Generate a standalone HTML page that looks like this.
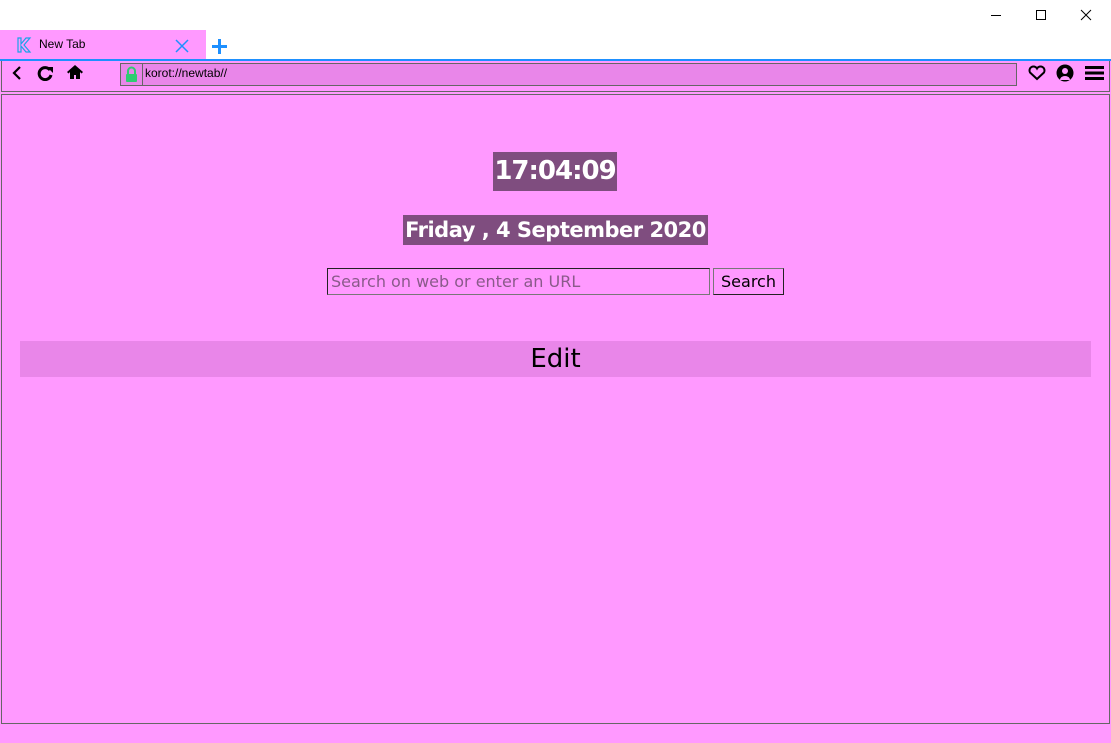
<!DOCTYPE html>
<html><head><meta charset="utf-8"><style>
*{margin:0;padding:0;box-sizing:border-box}
body{width:1111px;height:743px;background:#fff;position:relative;overflow:hidden;font-family:"DejaVu Sans","Liberation Sans",sans-serif}
.a{position:absolute}
</style></head><body>
<svg class="a" style="left:0;top:0" width="1111" height="30">
<line x1="991" y1="15.5" x2="1001" y2="15.5" stroke="#000"/>
<rect x="1036.5" y="10.5" width="9" height="9" fill="none" stroke="#000"/>
<path d="M1081 10L1091 20M1091 10L1081 20" stroke="#000"/>
</svg>
<div class="a" style="left:0;top:59px;width:1111px;height:684px;background:#ff99ff"></div>
<div class="a" style="left:0;top:30px;width:206px;height:30px;background:#ff99ff"></div>
<svg class="a" style="left:16px;top:37px" width="16" height="16"><path d="M2 1h3v6l5-6h4l-6 7 6 7h-4l-5-6v6H2z" fill="none" stroke="#1aa3e8" stroke-width="1.2"/></svg>
<div class="a" style="left:39px;top:37px;font:12px 'Liberation Sans',sans-serif;color:#000">New Tab</div>
<svg class="a" style="left:175px;top:39px" width="14" height="14"><path d="M1 1L13 13M13 1L1 13" stroke="#1e90ff" stroke-width="1.5"/></svg>
<svg class="a" style="left:211px;top:38px" width="17" height="17"><path d="M8.5 1v15M1 8.5h15" stroke="#1e90ff" stroke-width="3"/></svg>
<div class="a" style="left:0;top:59px;width:1111px;height:2px;background:#1e90ff"></div>
<div class="a" style="left:1px;top:61px;width:1109px;height:31px;border:1px solid #666;border-top:none"></div>
<svg class="a" style="left:10px;top:65px" width="14" height="16"><path d="M10 2L4 8l6 6" fill="none" stroke="#000" stroke-width="2.2"/></svg>
<svg class="a" style="left:37px;top:65px" width="18" height="16"><path d="M13 5A6 6 0 1 0 14 10" fill="none" stroke="#000" stroke-width="3"/><path d="M10 2h6v6z" fill="#000"/></svg>
<svg class="a" style="left:66px;top:64px" width="18" height="16"><path d="M9 1L1 8l1.5 1.5L4 8v7h4v-4h2v4h4V8l1.5 1.5L17 8z" fill="#000"/></svg>
<div class="a" style="left:120px;top:63px;width:897px;height:23px;background:#e986e9;border:1px solid #666"></div>
<div class="a" style="left:142px;top:63px;width:1px;height:23px;background:#666"></div>
<svg class="a" style="left:124px;top:66px" width="15" height="17"><path d="M4 8V5a3.5 3.5 0 0 1 7 0v3" fill="none" stroke="#2ecc71" stroke-width="2"/><rect x="2" y="8" width="11" height="8" rx="1" fill="#2ecc71"/></svg>
<div class="a" style="left:145px;top:66px;font:12px 'Liberation Sans',sans-serif;color:#000">korot://newtab//</div>
<svg class="a" style="left:1028px;top:65px" width="18" height="16"><path d="M9 14L2 7.5A3.5 3.5 0 0 1 9 3.5 3.5 3.5 0 0 1 16 7.5z" fill="none" stroke="#000" stroke-width="2"/></svg>
<svg class="a" style="left:1056px;top:64px" width="18" height="18"><circle cx="9" cy="9" r="8.5" fill="#000"/><circle cx="9" cy="7" r="3" fill="#ff99ff"/><path d="M4 16a5 4 0 0 1 10 0z" fill="#ff99ff"/></svg>
<svg class="a" style="left:1084px;top:65px" width="21" height="16"><path d="M1 2.5h19M1 8h19M1 13.5h19" stroke="#000" stroke-width="3"/></svg>
<div class="a" style="left:1px;top:94px;width:1109px;height:630px;border:1px solid #666"></div>
<div class="a" style="left:493px;top:152px;width:124px;height:39px;background:#7f4d7f;color:#fff;font:bold 26px 'DejaVu Sans',sans-serif;text-align:center;line-height:39px;letter-spacing:-1px;white-space:nowrap">17:04:09</div>
<div class="a" style="left:403px;top:215px;width:305px;height:30px;background:#7f4d7f;color:#fff;font:bold 21px 'DejaVu Sans',sans-serif;text-align:center;line-height:30px;letter-spacing:-0.5px;white-space:nowrap">Friday , 4 September 2020</div>
<div class="a" style="left:327px;top:268px;width:383px;height:27px;border:1px solid;border-color:#222 #777 #777 #222;font:16px 'DejaVu Sans',sans-serif;color:#8a5a8a;line-height:25px;padding-left:3px;white-space:nowrap;overflow:hidden">Search on web or enter an URL</div>
<div class="a" style="left:713px;top:268px;width:71px;height:27px;border:1px solid;border-color:#777 #222 #222 #777;font:16px 'DejaVu Sans',sans-serif;color:#000;line-height:25px;text-align:center">Search</div>
<div class="a" style="left:20px;top:341px;width:1071px;height:36px;background:#e986e9;font:26px 'DejaVu Sans',sans-serif;color:#000;text-align:center;line-height:36px">Edit</div>
</body></html>
